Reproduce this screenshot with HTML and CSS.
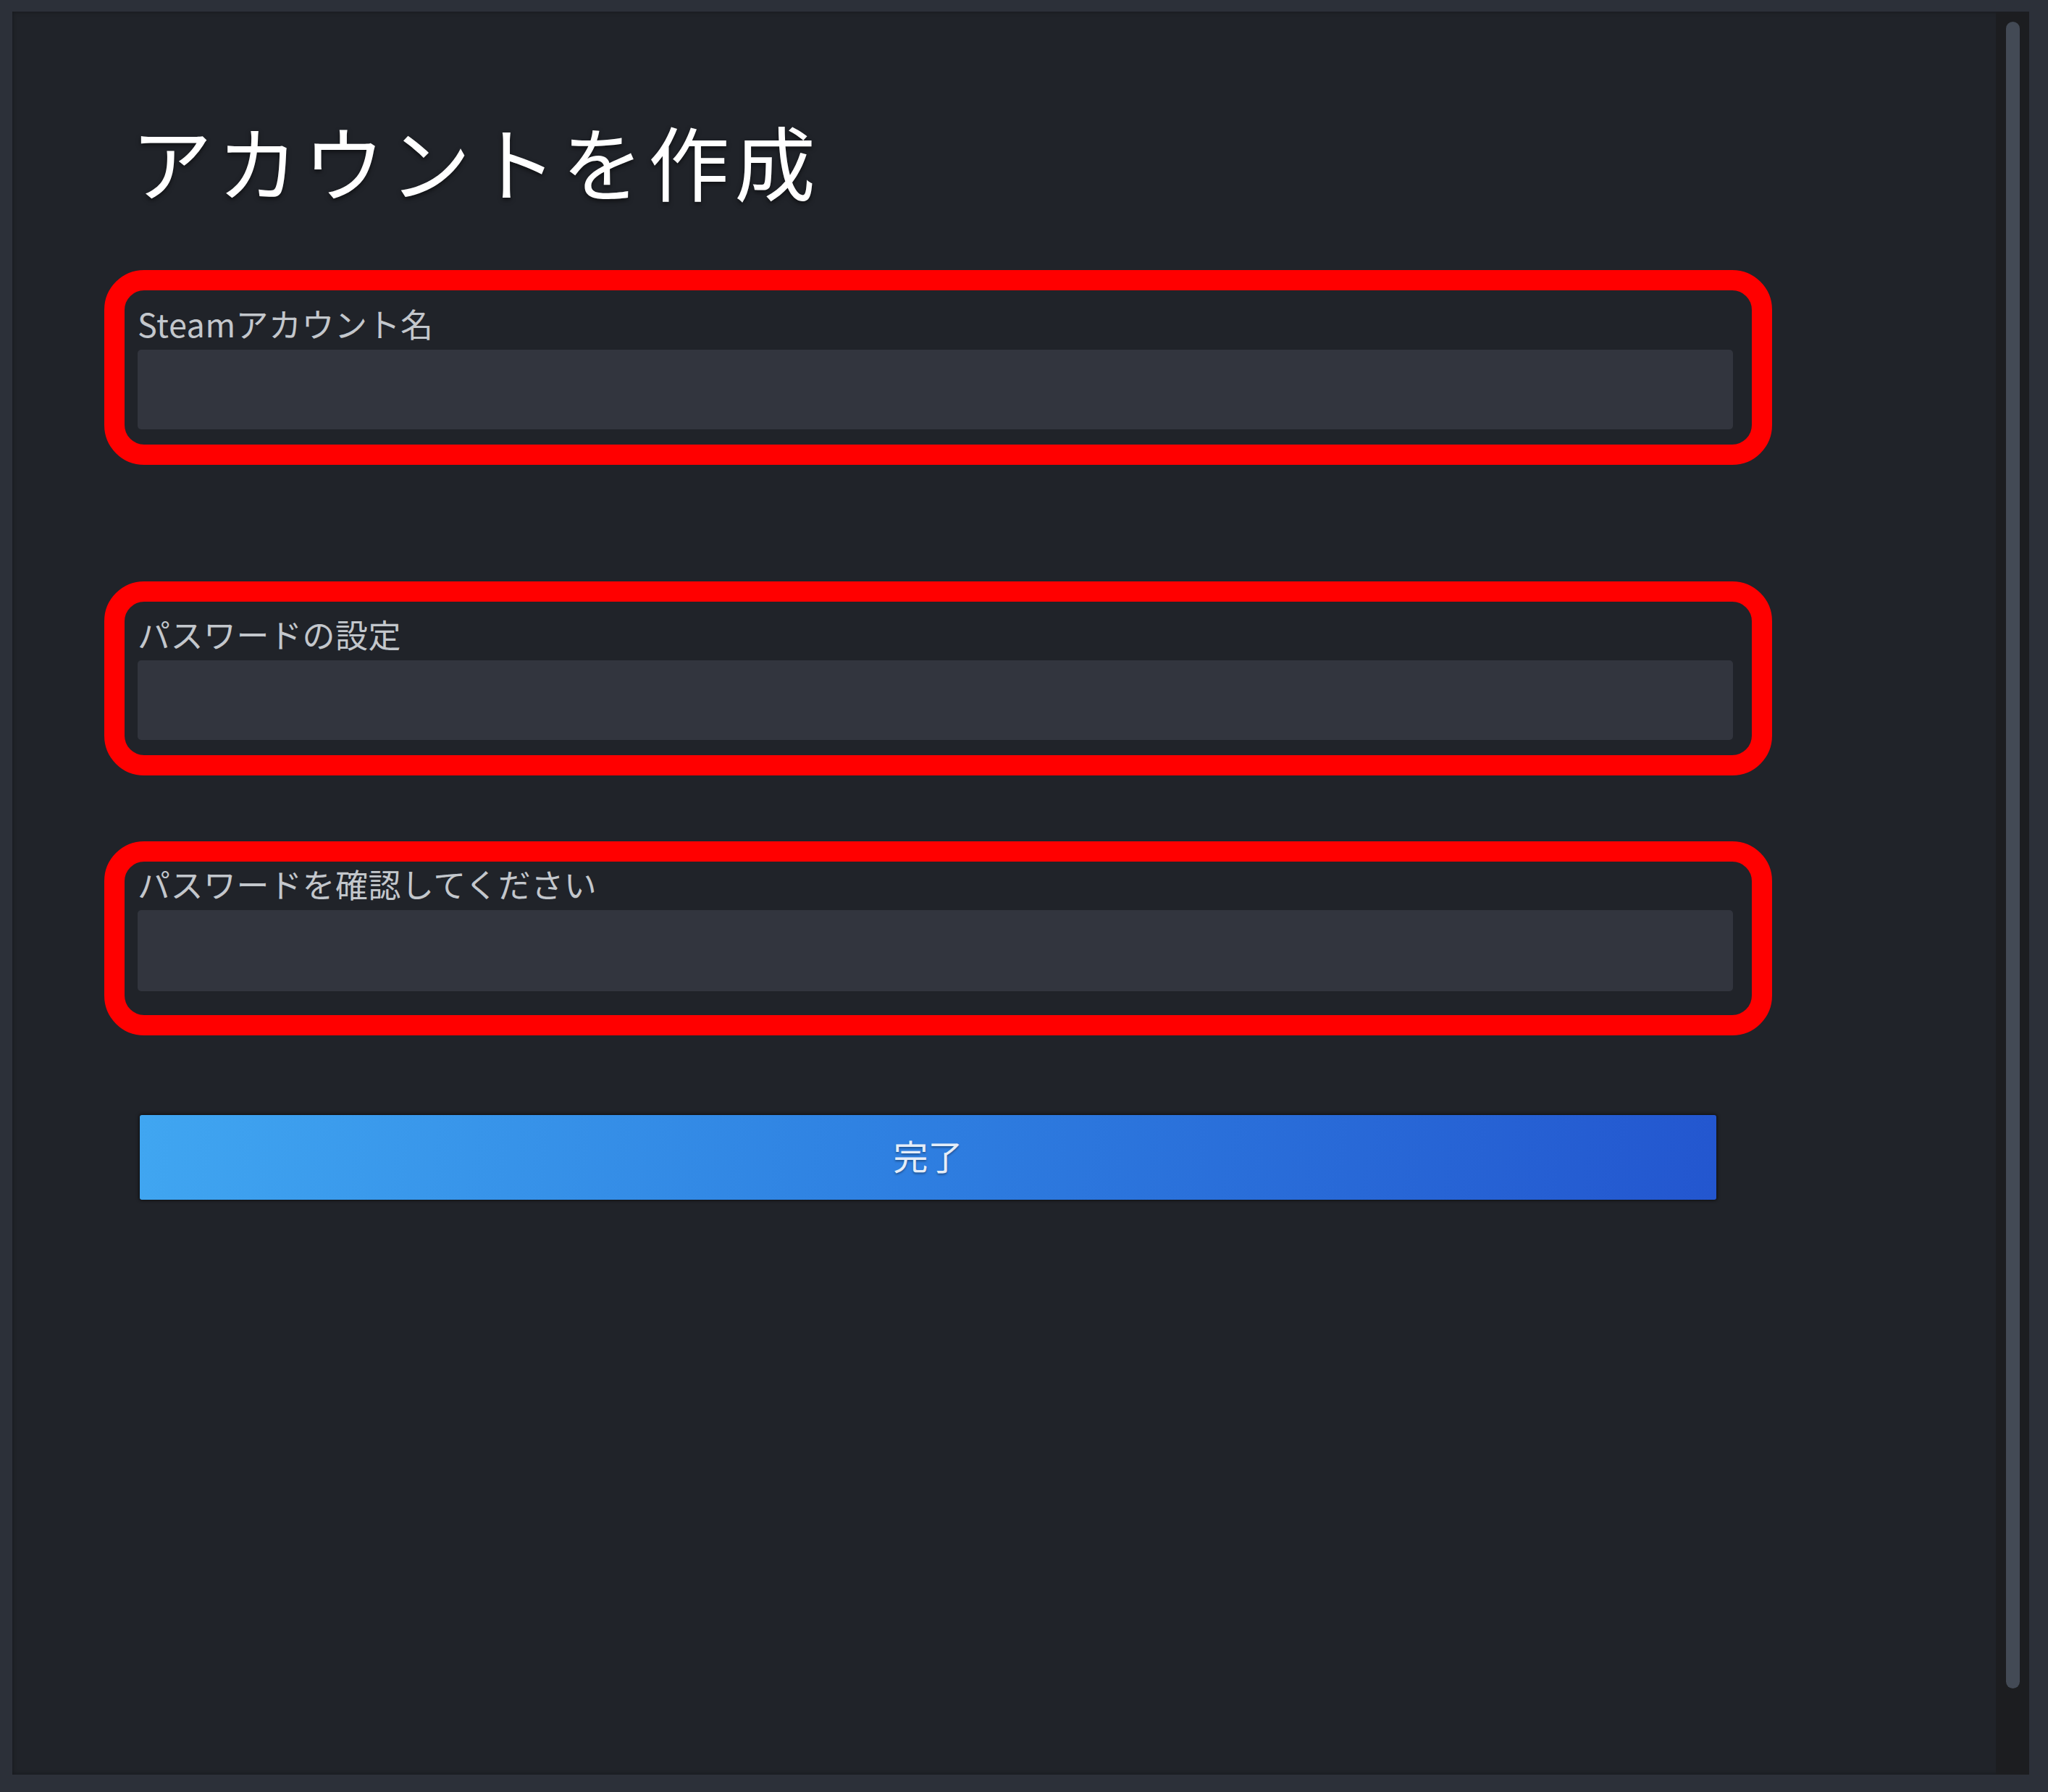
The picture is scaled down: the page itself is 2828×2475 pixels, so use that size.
FILE: index.html
```html
<!DOCTYPE html>
<html lang="ja">
<head>
<meta charset="utf-8">
<title>アカウントを作成</title>
<link rel="stylesheet" href="styles.css">
</head>
<body>
<div class="window">
  <div class="panel">
    <main class="content">
      <h1 class="title">アカウントを作成</h1>
      <div class="mark mark-first">
        <div class="field">
          <label class="label">Steamアカウント名</label>
          <div class="input"></div>
        </div>
      </div>
      <div class="mark mark-second">
        <div class="field">
          <label class="label">パスワードの設定</label>
          <div class="input"></div>
        </div>
      </div>
      <div class="mark mark-third">
        <div class="field">
          <label class="label">パスワードを確認してください</label>
          <div class="input input-tall"></div>
        </div>
      </div>
      <button class="submit">完了</button>
    </main>
    <div class="scroll-track"><div class="scroll-thumb"></div></div>
  </div>
</div>
</body>
</html>
```

FILE: styles.css
```css
html, body {
  margin: 0;
  padding: 0;
  width: 2828px;
  height: 2475px;
  overflow: hidden;
  background: #2c3039;
  font-family: "Noto Sans CJK JP", "Noto Sans", sans-serif;
}

.window {
  box-sizing: border-box;
  width: 2828px;
  height: 2475px;
  padding: 16px 26px 24px 17px;
  display: flex;
}

.panel {
  flex: 1;
  display: flex;
  background: #202329;
  box-shadow: inset 0 0 6px rgba(0, 0, 0, 0.35);
}

.content {
  flex: 1;
  padding: 140px 0 0 173px;
  display: flex;
  flex-direction: column;
  align-items: flex-start;
}

.title {
  margin: 0 0 87px -9px;
  font-size: 112px;
  line-height: 130px;
  font-weight: 400;
  letter-spacing: 7px;
  color: #ffffff;
  text-shadow: 0 3px 6px rgba(0, 0, 0, 0.55);
}

.mark {
  border: 28px solid #ff0000;
  border-radius: 55px;
  margin-left: -46px;
  padding: 19px 26px 21px 18px;
}

.mark-second {
  margin-top: 161px;
  padding-top: 18px;
}

.mark-third {
  margin-top: 91px;
  padding-top: 4px;
  padding-bottom: 33px;
}

.field {
  width: 2203px;
  display: flex;
  flex-direction: column;
}

.label {
  font-size: 45px;
  line-height: 54px;
  color: #c3c7cc;
  margin-bottom: 9px;
  letter-spacing: 0.5px;
}

.input {
  height: 110px;
  background: #32353e;
  border-radius: 5px;
}

.input-tall {
  height: 112px;
}

.submit {
  margin: 110px 0 0 3px;
  width: 2177px;
  height: 117px;
  border: none;
  border-radius: 3px;
  background: linear-gradient(100deg, #40a6f1 0%, #2f82e2 45%, #2356cf 100%);
  box-shadow: 0 0 4px 1px rgba(0, 0, 0, 0.6);
  color: #e4edf8;
  font-family: "Noto Sans CJK JP", "Noto Sans", sans-serif;
  font-size: 48px;
  line-height: 110px;
  padding: 0 0 7px 0;
  text-shadow: 0 2px 3px rgba(0, 0, 0, 0.35);
}

.scroll-track {
  width: 46px;
  background: #1c1d20;
  padding: 14px 0 0 14px;
  box-sizing: border-box;
}

.scroll-thumb {
  width: 19px;
  height: 2302px;
  border-radius: 10px;
  background: #434a55;
}
```
